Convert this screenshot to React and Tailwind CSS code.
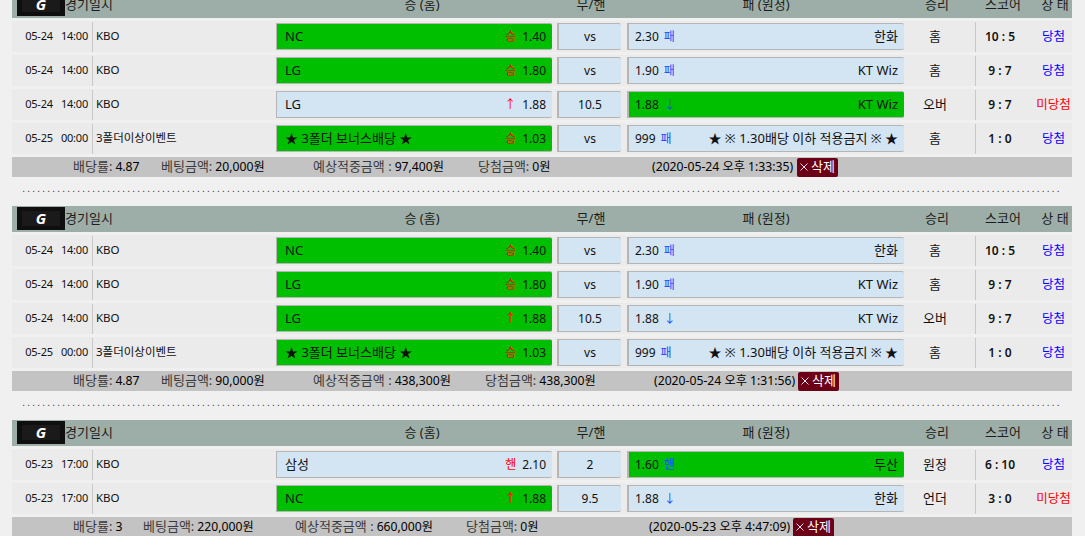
import React from 'react';

const blocks = [
  {
    rows: [
      { date: '05-24', time: '14:00', league: 'KBO', home: 'NC', homeMark: '승', homeOdds: '1.40', mid: 'vs', awayOdds: '2.30', awayMark: '패', away: '한화', picked: 'home', result: '홈', score: '10 : 5', won: true },
      { date: '05-24', time: '14:00', league: 'KBO', home: 'LG', homeMark: '승', homeOdds: '1.80', mid: 'vs', awayOdds: '1.90', awayMark: '패', away: 'KT Wiz', picked: 'home', result: '홈', score: '9 : 7', won: true },
      { date: '05-24', time: '14:00', league: 'KBO', home: 'LG', homeMark: '↑', homeOdds: '1.88', mid: '10.5', awayOdds: '1.88', awayMark: '↓', away: 'KT Wiz', picked: 'away', result: '오버', score: '9 : 7', won: false },
      { date: '05-25', time: '00:00', league: '3폴더이상이벤트', home: '★ 3폴더 보너스배당 ★', homeMark: '승', homeOdds: '1.03', mid: 'vs', awayOdds: '999', awayMark: '패', away: '★ ※ 1.30배당 이하 적용금지 ※ ★', picked: 'home', result: '홈', score: '1 : 0', won: true },
    ],
    footer: [
      { cls: 'w-[88px]', label: '배당률:', value: '4.87' },
      { cls: 'w-[152px]', label: '베팅금액:', value: '20,000원' },
      { cls: 'w-[165px]', label: '예상적중금액 :', value: '97,400원' },
      { cls: 'w-[174px]', label: '당첨금액:', value: '0원' },
      { cls: 'w-[145px]', label: '', value: '(2020-05-24 오후 1:33:35)' },
    ],
  },
  {
    rows: [
      { date: '05-24', time: '14:00', league: 'KBO', home: 'NC', homeMark: '승', homeOdds: '1.40', mid: 'vs', awayOdds: '2.30', awayMark: '패', away: '한화', picked: 'home', result: '홈', score: '10 : 5', won: true },
      { date: '05-24', time: '14:00', league: 'KBO', home: 'LG', homeMark: '승', homeOdds: '1.80', mid: 'vs', awayOdds: '1.90', awayMark: '패', away: 'KT Wiz', picked: 'home', result: '홈', score: '9 : 7', won: true },
      { date: '05-24', time: '14:00', league: 'KBO', home: 'LG', homeMark: '↑', homeOdds: '1.88', mid: '10.5', awayOdds: '1.88', awayMark: '↓', away: 'KT Wiz', picked: 'home', result: '오버', score: '9 : 7', won: true },
      { date: '05-25', time: '00:00', league: '3폴더이상이벤트', home: '★ 3폴더 보너스배당 ★', homeMark: '승', homeOdds: '1.03', mid: 'vs', awayOdds: '999', awayMark: '패', away: '★ ※ 1.30배당 이하 적용금지 ※ ★', picked: 'home', result: '홈', score: '1 : 0', won: true },
    ],
    footer: [
      { cls: 'w-[88px]', label: '배당률:', value: '4.87' },
      { cls: 'w-[152px]', label: '베팅금액:', value: '90,000원' },
      { cls: 'w-[172px]', label: '예상적중금액 :', value: '438,300원' },
      { cls: 'w-[169px]', label: '당첨금액:', value: '438,300원' },
      { cls: 'w-[144px]', label: '', value: '(2020-05-24 오후 1:31:56)' },
    ],
  },
  {
    rows: [
      { date: '05-23', time: '17:00', league: 'KBO', home: '삼성', homeMark: '핸', homeOdds: '2.10', mid: '2', awayOdds: '1.60', awayMark: '핸', away: '두산', picked: 'away', result: '원정', score: '6 : 10', won: true },
      { date: '05-23', time: '17:00', league: 'KBO', home: 'NC', homeMark: '↑', homeOdds: '1.88', mid: '9.5', awayOdds: '1.88', awayMark: '↓', away: '한화', picked: 'home', result: '언더', score: '3 : 0', won: false },
    ],
    footer: [
      { cls: 'w-[70px]', label: '배당률:', value: '3' },
      { cls: 'w-[152px]', label: '베팅금액:', value: '220,000원' },
      { cls: 'w-[171px]', label: '예상적중금액 :', value: '660,000원' },
      { cls: 'w-[183px]', label: '당첨금액:', value: '0원' },
      { cls: 'w-[144px]', label: '', value: '(2020-05-23 오후 4:47:09)' },
    ],
  },
];

const pickClass = (on) => (on ? 'bg-[#00bf00]' : 'bg-[#d3e4f3]');

const Logo = () => (
  <div className="w-[48px] h-[23px] bg-[#0f0f0f] flex items-center justify-center">
    <div className="w-[38px] h-[15px] bg-[#1a1a1a] flex items-center justify-center">
      <span className="text-white font-bold italic text-[15px] leading-none">G</span>
    </div>
  </div>
);

const TableHeader = () => (
  <div className="h-[26px] bg-[#9caea7] flex items-center text-[13px] text-[#1c1c1c] whitespace-nowrap">
    <div className="w-[264px] h-full flex pl-[5px]">
      <div className="pt-[1px]">
        <Logo />
      </div>
      <span className="self-center">경기일시</span>
    </div>
    <div className="w-[280px] pl-[12px] text-center">승 (홈)</div>
    <div className="w-[70px] text-center">무/핸</div>
    <div className="w-[280px] text-center">패 (원정)</div>
    <div className="w-[62px] text-center">승리</div>
    <div className="w-[70px] text-center">스코어</div>
    <div className="w-[34px] text-center">상 태</div>
  </div>
);

const Row = ({ row }) => (
  <div className="h-[31px] bg-[#ebebeb] flex items-center text-[13px] text-[#111111] whitespace-nowrap">
    <div className="w-[80px] -mt-[1px] flex items-center justify-end pr-[4px] gap-[8px] text-[11px] tracking-[-0.2px]">
      <span>{row.date}</span>
      <span>{row.time}</span>
    </div>
    <div className="w-px h-[30px] bg-[#c8c8c8]"></div>
    <div className="w-[183px] -mt-[1px] pl-[3px] text-[11.5px]">{row.league}</div>
    <div className={`w-[276px] h-[27px] flex items-center justify-between pl-[8px] pr-[6px] border-y border-l border-[#b5b5b5] rounded-r-[2px] ${pickClass(row.picked === 'home')}`}>
      <span>{row.home}</span>
      <span className="flex items-center">
        <span className="text-[12px] text-[#ff0000] mr-[6px]">{row.homeMark}</span>
        <span className="text-[12px]">{row.homeOdds}</span>
      </span>
    </div>
    <div className="w-[5px]"></div>
    <div className="w-[64px] h-[27px] flex items-center justify-center text-[12px] bg-[#d3e4f3] border-y border-l-2 border-[#b5b5b5] rounded-r-[2px]">
      {row.mid}
    </div>
    <div className="w-[6px]"></div>
    <div className={`w-[277px] h-[27px] flex items-center justify-between pl-[6px] pr-[6px] border-y border-l-2 border-[#b5b5b5] rounded-r-[2px] ${pickClass(row.picked === 'away')}`}>
      <span className="flex items-center">
        <span className="text-[12px]">{row.awayOdds}</span>
        <span className="text-[12px] text-[#1d4dff] ml-[5px]">{row.awayMark}</span>
      </span>
      <span>{row.away}</span>
    </div>
    <div className="w-[71px] pr-[9px] text-center">{row.result}</div>
    <div className="w-px h-[30px] bg-[#c8c8c8]"></div>
    <div className="w-[48px] text-center text-[12px] font-semibold">{row.score}</div>
    <div className={`w-[48px] pl-[11px] pt-[2px] text-center text-[12.5px] ${row.won ? 'text-[#0000ff]' : 'text-[#ff0000]'}`}>
      {row.won ? '당첨' : '미당첨'}
    </div>
  </div>
);

const Footer = ({ items }) => (
  <div className="h-[20px] bg-[#c3c3c3] flex items-center text-[12.2px] text-black pl-[61px] whitespace-nowrap">
    {items.map((item) => (
      <div key={item.value} className={item.cls}>
        {item.label && <span className="text-[13px] text-[#3a3a3a] mr-[3px]">{item.label}</span>}
        <span>{item.value}</span>
      </div>
    ))}
    <button className="h-[19px] w-[41px] bg-[#6c0017] text-white text-[13px] rounded-[2px] flex items-center justify-center gap-[3px]">
      <svg width="8" height="8" viewBox="0 0 8 8" stroke="#ffffff" strokeWidth="0.9" fill="none">
        <path d="M0.5 0.5l7 7M7.5 0.5l-7 7" />
      </svg>
      <span>삭제</span>
    </button>
  </div>
);

const Block = ({ block }) => (
  <div>
    <TableHeader />
    <div className="flex flex-col gap-[3px] py-[3px]">
      {block.rows.map((row, i) => (
        <Row key={i} row={row} />
      ))}
    </div>
    <Footer items={block.footer} />
  </div>
);

const Dots = () => (
  <div className="h-[29px] flex items-center justify-center overflow-hidden">
    <span className="font-['Liberation_Sans'] text-[10px] tracking-[2.22px] text-[#333333] leading-none -mt-[5px] whitespace-nowrap">
      {'.'.repeat(208)}
    </span>
  </div>
);

export default function App() {
  return (
    <div
      className="h-[536px] overflow-hidden bg-[#f0f0f0] pl-[12px] pr-[13px]"
      style={{ fontFamily: '"Noto Sans", "Noto Sans CJK KR", sans-serif' }}
    >
      <div className="-mt-[8px] flex flex-col">
        {blocks.map((block, i) => (
          <div key={i}>
            <Block block={block} />
            {i < blocks.length - 1 && <Dots />}
          </div>
        ))}
      </div>
    </div>
  );
}
